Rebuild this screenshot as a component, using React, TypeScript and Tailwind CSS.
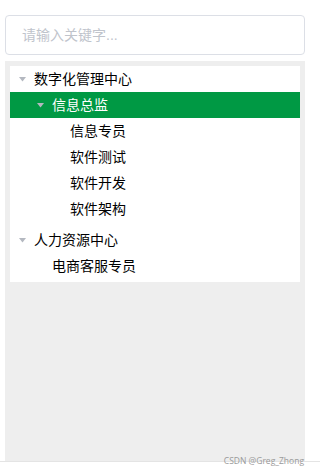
import type { ReactNode } from "react"

type Node = { label: string; children?: Node[]; active?: boolean; gapAfter?: boolean }

const tree: Node[] = [
  {
    label: "数字化管理中心",
    gapAfter: true,
    children: [
      {
        label: "信息总监",
        active: true,
        children: [
          { label: "信息专员" },
          { label: "软件测试" },
          { label: "软件开发" },
          { label: "软件架构" },
        ],
      },
    ],
  },
  {
    label: "人力资源中心",
    children: [{ label: "电商客服专员" }],
  },
]

// Element-style caret, pointing down since every folder here is open
function Caret({ show }: { show: boolean }) {
  return (
    <span className="flex w-6 shrink-0 items-center justify-center">
      {show && (
        <svg width="7" height="5" viewBox="0 0 7 5" className="block">
          <path d="M0 0h7L3.5 4.5z" fill="#b4b8c0" />
        </svg>
      )}
    </span>
  )
}

function TreeNode({ node, level }: { node: Node; level: number }): ReactNode {
  const pad = ["pl-0", "pl-[18px]", "pl-[36px]"][level]
  return (
    <div className={node.gapAfter ? "mb-[5px]" : ""}>
      <div
        className={`flex h-[26px] items-center ${pad} ${
          node.active ? "bg-[#009944] text-white" : "text-[#000]"
        }`}
      >
        <Caret show={!!node.children} />
        <span className="text-[14px] leading-none">{node.label}</span>
      </div>
      {node.children?.map((c) => (
        <TreeNode key={c.label} node={c} level={level + 1} />
      ))}
    </div>
  )
}

export default function App() {
  return (
    <div
      className="relative h-[476px] w-[320px] bg-white"
      style={{ fontFamily: '"Liberation Sans", "Noto Sans CJK SC", sans-serif' }}
    >
      <div className="flex flex-col px-[5px] pt-[15px]">
        <div className="flex h-[40px] w-[300px] items-center rounded-[4px] border border-[#dcdfe6] px-[16px] text-[14px] text-[#c0c4cc]">
          请输入关键字...
        </div>
        <div className="mt-[6px] h-[400px] w-[300px] bg-[#eeeeee] p-[5px]">
          <div className="bg-white pb-[3px]">
            {tree.map((n) => (
              <TreeNode key={n.label} node={n} level={0} />
            ))}
          </div>
        </div>
      </div>
      <div className="absolute left-0 right-0 top-[461px] h-px bg-[#e4e4e4]" />
      <div
        className="absolute right-[16px] top-[455px] text-[8.5px] leading-[11px] text-[#9a9a9a]"
        style={{ fontFamily: '"Open Sans", sans-serif' }}
      >
        CSDN @Greg_Zhong
      </div>
    </div>
  )
}
